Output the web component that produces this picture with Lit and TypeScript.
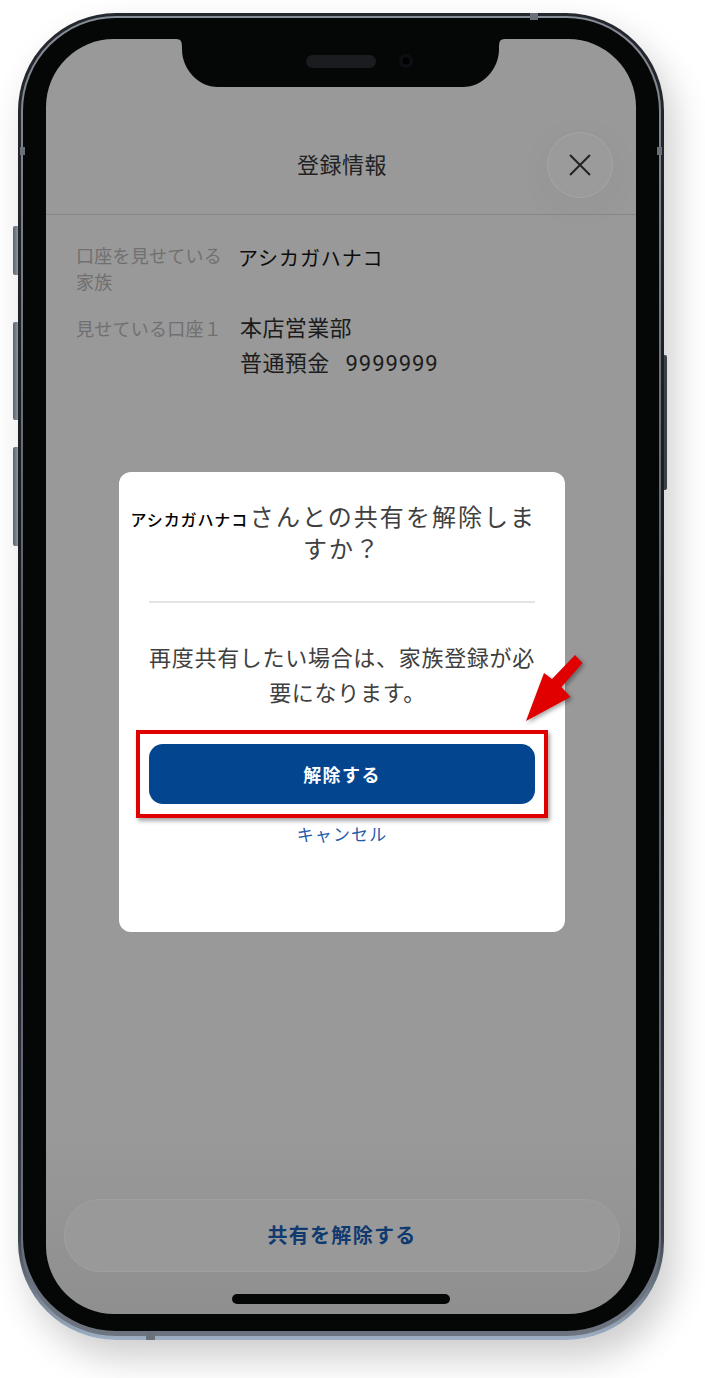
import { LitElement, html, css, svg } from "lit";
import { customElement } from "lit/decorators.js";

@customElement("app-root")
export class AppRoot extends LitElement {
  static styles = css`
    :host {
      display: block;
      width: 705px;
      height: 1378px;
      background: #fff;
      box-sizing: border-box;
      padding: 13px 0 0 18px;
      overflow: hidden;
      font-family: "Noto Sans CJK JP", "Noto Sans", sans-serif;
    }
    .phone {
      position: relative;
      width: 646px;
      height: 1327px;
      box-sizing: border-box;
      padding: 3px 3px 4px;
      border-radius: 98px;
      background: linear-gradient(180deg, #24272d 0%, #16181c 60%, #3a4048 92%, #9fb0c4 100%);
      box-shadow: 10px 18px 36px rgba(0, 0, 0, 0.2);
    }
    .ring {
      height: 100%;
      box-sizing: border-box;
      padding: 2px 2px 5px;
      border-radius: 95px;
      background: linear-gradient(180deg, #878d96 0%, #565c65 50%, #6d7480 100%);
    }
    .bezel {
      height: 100%;
      box-sizing: border-box;
      padding: 21px 23px 17px;
      border-radius: 93px;
      background: #050707;
    }
    .screen {
      position: relative;
      height: 100%;
      display: flex;
      flex-direction: column;
      border-radius: 68px;
      overflow: hidden;
      background: linear-gradient(180deg, #999 0%, #999 86%, #8f8f8f 100%);
    }
    .notch {
      position: absolute;
      left: 130px;
      top: 0;
      display: block;
    }
    .btn-side {
      position: absolute;
      background: linear-gradient(90deg, #59616c, #8e98a5);
      border-radius: 2px 0 0 2px;
      width: 5px;
      left: -5px;
    }
    .btn-right {
      position: absolute;
      right: -3px;
      top: 342px;
      width: 3px;
      height: 135px;
      background: #3d434b;
      border-radius: 0 2px 2px 0;
    }
    .antenna {
      position: absolute;
      background: #6a717b;
    }
    .a1 { left: 2px; top: 134px; width: 5px; height: 8px; }
    .a2 { right: 2px; top: 134px; width: 5px; height: 8px; }
    .a3 { left: 512px; top: 0; width: 8px; height: 7px; }
    .a4 { left: 128px; bottom: 0; width: 9px; height: 8px; }

    header {
      display: grid;
      grid-template-columns: 1fr auto 1fr;
      align-items: center;
      padding: 93px 23px 16px;
      border-bottom: 1px solid #868686;
    }
    h1 {
      grid-column: 2;
      margin: 0;
      padding: 0 0 4px 2px;
      font-size: 22px;
      line-height: 32px;
      font-weight: 400;
      letter-spacing: 0.5px;
      color: #222;
    }
    .close {
      grid-column: 3;
      justify-self: end;
      width: 66px;
      height: 66px;
      box-sizing: border-box;
      display: flex;
      align-items: center;
      justify-content: center;
      border-radius: 50%;
      border: 1px solid #a6a6a6;
      background: #9b9b9b;
      box-shadow: 0 8px 44px rgba(0, 0, 0, 0.035);
    }
    .info {
      display: grid;
      grid-template-columns: 163px 1fr;
      row-gap: 17px;
      padding: 23px 0 0 30px;
    }
    .label {
      padding-top: 4px;
      font-size: 18px;
      line-height: 26px;
      letter-spacing: 0.25px;
      color: #707070;
    }
    .value {
      font-size: 22px;
      line-height: 35px;
      letter-spacing: 0.4px;
      color: #1c1c1c;
    }
    .name {
      padding-top: 2px;
      margin-left: -1px;
      font-size: 20px;
      letter-spacing: 0.9px;
      color: #0c0c0c;
    }
    .value.acct {
      padding-left: 1px;
      margin-top: -2px;
    }
    .num {
      font-family: Roboto, sans-serif;
      font-size: 22px;
      letter-spacing: 0.9px;
      margin-left: 16px;
    }
    .bottom {
      margin: auto 16px 0 18px;
      height: 73px;
      box-sizing: border-box;
      display: flex;
      align-items: center;
      justify-content: center;
      padding-bottom: 2px;
      border-radius: 36px;
      border: 1px solid #a0a0a0;
      background: #999;
      font-size: 20px;
      font-weight: 700;
      letter-spacing: 1.3px;
      color: #0f3a70;
    }
    .home {
      align-self: center;
      margin: 22px 0 10px;
      width: 218px;
      height: 10px;
      border-radius: 5px;
      background: #050707;
    }
    .modal {
      position: absolute;
      left: 73px;
      top: 433px;
      width: 446px;
      height: 460px;
      box-sizing: border-box;
      padding-top: 28px;
      border-radius: 12px;
      background: #fff;
      text-align: center;
    }
    .m-title {
      margin: 0;
      padding: 0 25px;
      font-size: 24px;
      line-height: 32px;
      font-weight: 400;
      letter-spacing: 2.05px;
      color: #404040;
    }
    .m-title span {
      display: inline-block;
      box-sizing: border-box;
      width: 127px;
      margin-left: -25px;
      padding-left: 6px;
      font-size: 16px;
      line-height: 20px;
      letter-spacing: 0.9px;
      font-weight: 500;
      color: #000;
    }
    .divider {
      height: 2px;
      margin: 37px 30px 0;
      background: #e4e4e4;
    }
    .m-body {
      margin: 36px 0 0;
      padding: 0 25px;
      font-size: 22px;
      line-height: 35px;
      letter-spacing: 0.7px;
      color: #404040;
    }
    .m-body span {
      margin-left: 11px;
    }
    .m-action {
      position: relative;
      margin: 35px 30px 0;
    }
    .primary {
      height: 60px;
      display: flex;
      align-items: center;
      justify-content: center;
      border-radius: 14px;
      background: #03458f;
      color: #fff;
      font-size: 18px;
      font-weight: 700;
      letter-spacing: 1.4px;
    }
    .highlight {
      position: absolute;
      left: -13px;
      right: -13px;
      top: -14px;
      bottom: -14px;
      border: 4px solid #e00000;
      box-shadow: 2px 3px 4px rgba(0, 0, 0, 0.35);
    }
    .cancel {
      margin-top: 17px;
      font-size: 17px;
      line-height: 26px;
      letter-spacing: 1.1px;
      color: #1f5ba8;
    }
    .arrow {
      position: absolute;
      left: 508px;
      top: 642px;
      display: block;
      filter: drop-shadow(2px 2px 2px rgba(0, 0, 0, 0.35));
    }
  `;

  render() {
    return html`
      <div class="phone">
        <i class="btn-side" style="top:213px;height:49px"></i>
        <i class="btn-side" style="top:309px;height:98px"></i>
        <i class="btn-side" style="top:434px;height:99px"></i>
        <i class="btn-right"></i>
        <div class="ring">
          <div class="bezel">
            <div class="screen">
              <header>
                <h1>登録情報</h1>
                <div class="close">
                  <svg width="24" height="24" viewBox="0 0 24 24" fill="none" stroke="#222" stroke-width="2">
                    <path d="M2 2 L22 22 M22 2 L2 22" />
                  </svg>
                </div>
              </header>
              <div class="info">
                <div class="label">口座を見せている家族</div>
                <div class="value name">アシカガハナコ</div>
                <div class="label">見せている口座１</div>
                <div class="value acct">本店営業部<br />普通預金<span class="num">9999999</span></div>
              </div>
              <div class="bottom">共有を解除する</div>
              <div class="home"></div>
              <svg class="notch" width="329" height="48" viewBox="0 0 329 48">
                ${svg`<path fill="#050707" d="M0 0 H329 C323 0 323 4 323 10 C323 30 307 48 287 48 H42 C22 48 6 30 6 10 C6 4 6 0 0 0 Z" />
                <rect x="130" y="16" width="70" height="13" rx="6.5" fill="#1a1c1f" />
                <circle cx="230" cy="22" r="7" fill="#0d0f12" />
                <circle cx="230" cy="22" r="3.5" fill="#000" />`}
              </svg>
              <div class="modal">
                <h2 class="m-title"><span>アシカガハナコ</span>さんとの共有を解除しますか？</h2>
                <div class="divider"></div>
                <p class="m-body">再度共有したい場合は、家族登録が必<br /><span>要になります。</span></p>
                <div class="m-action">
                  <div class="primary">解除する</div>
                  <div class="highlight"></div>
                </div>
                <div class="cancel">キャンセル</div>
              </div>
            </div>
          </div>
        </div>
        <i class="antenna a1"></i>
        <i class="antenna a2"></i>
        <i class="antenna a3"></i>
        <i class="antenna a4"></i>
        <svg class="arrow" width="60" height="72" viewBox="0 0 60 72">
          <polygon fill="#e00000" points="0,66 18,18 26,24 49,0 56.5,8 35.5,32 44.5,42" />
        </svg>
      </div>
    `;
  }
}
